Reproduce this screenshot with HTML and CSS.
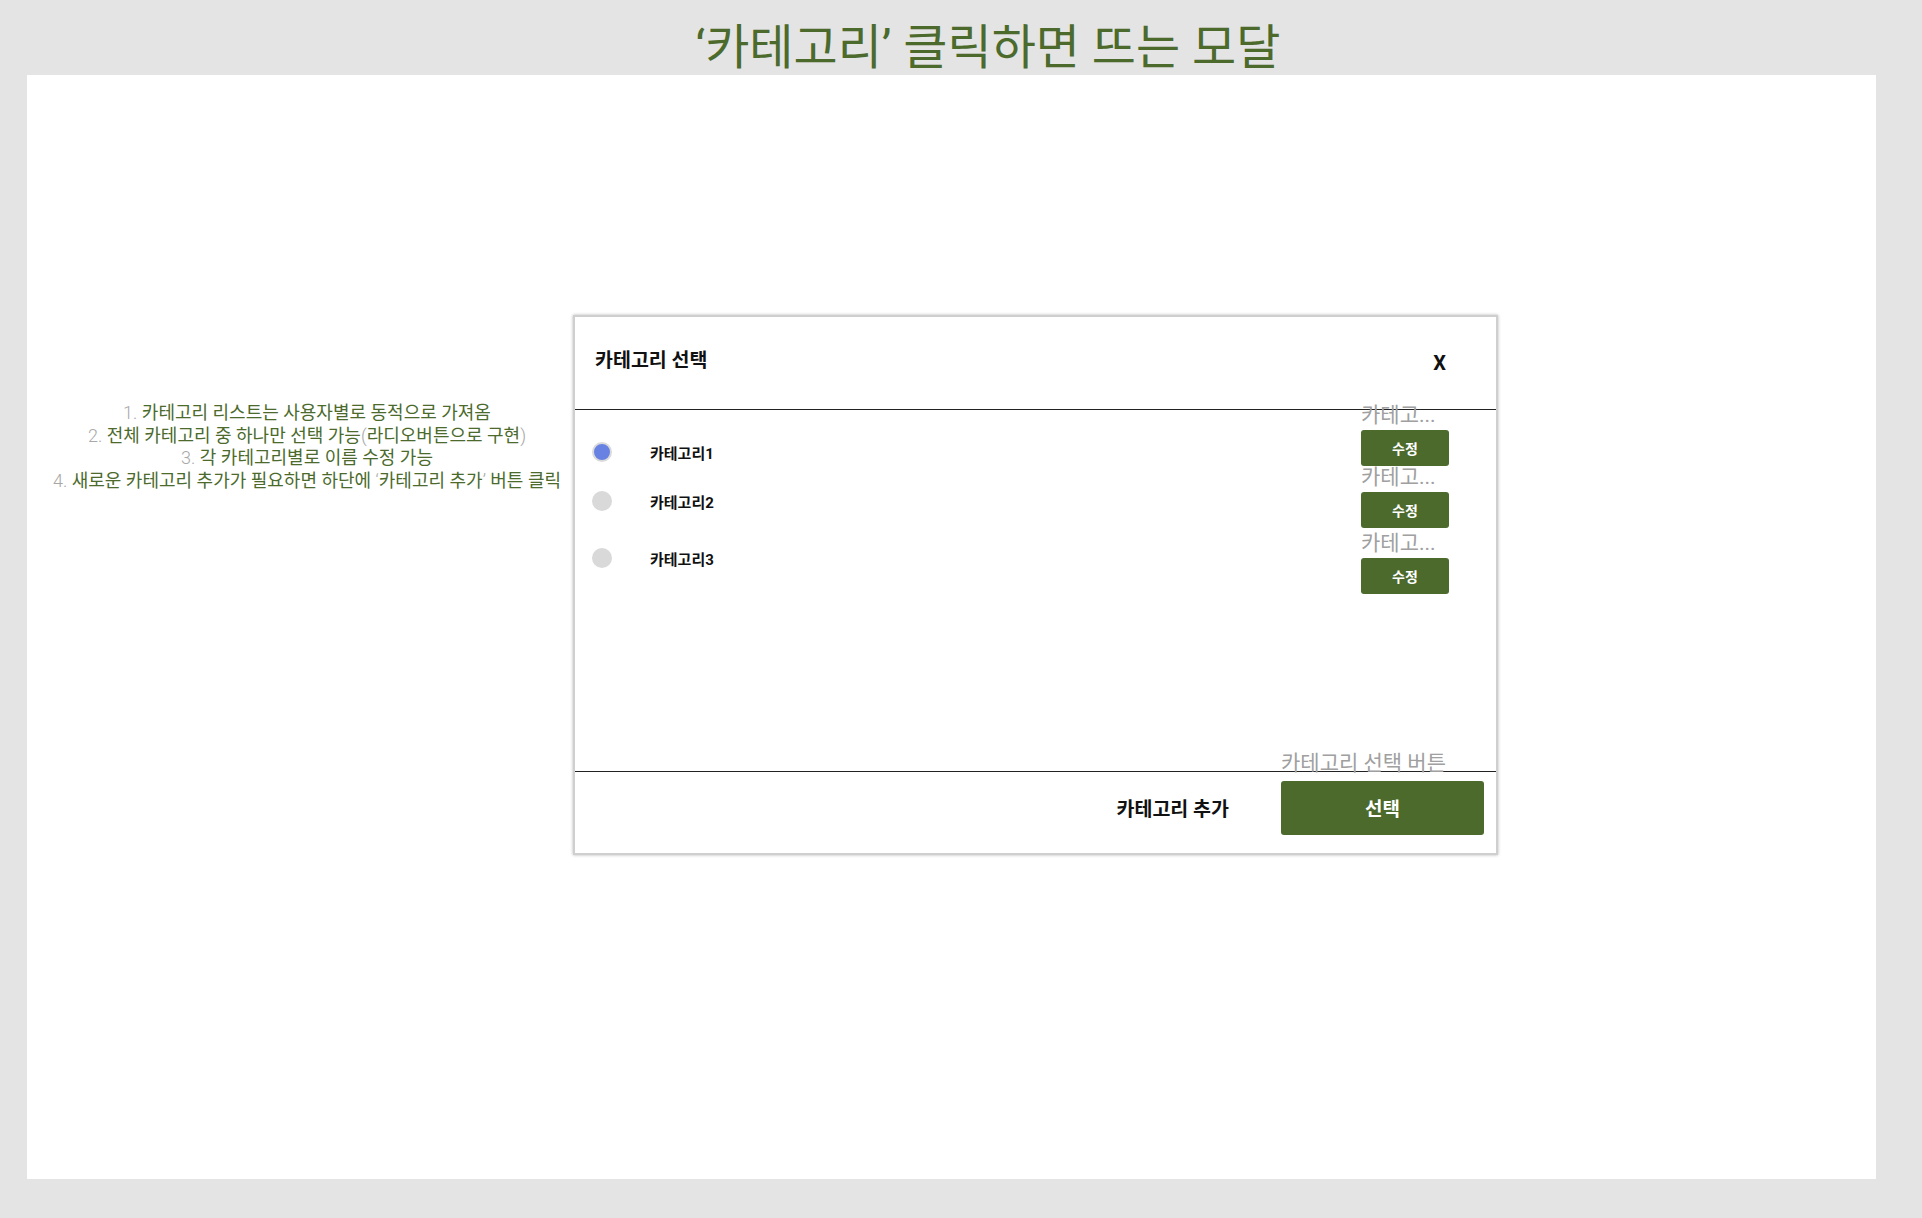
FILE: index.html
```html
<!DOCTYPE html>
<html lang="ko">
<head>
    <meta charset="UTF-8">
    <meta name="viewport" content="width=device-width, initial-scale=1.0">
    <title>카테고리 모달</title>

    <link rel="stylesheet" href="styles.css">
</head>
<body>

    <h1 class="page-title">‘카테고리’ 클릭하면 뜨는 모달</h1>

    <main class="board">
        <ol class="notes">
            <li><span class="num">1.</span> 카테고리 리스트는 사용자별로 동적으로 가져옴</li>
            <li><span class="num">2.</span> 전체 카테고리 중 하나만 선택 가능<span class="num">(</span>라디오버튼으로 구현<span class="num">)</span></li>
            <li><span class="num">3.</span> 각 카테고리별로 이름 수정 가능</li>
            <li><span class="num">4.</span> 새로운 카테고리 추가가 필요하면 하단에 <span class="num">‘</span>카테고리 추가<span class="num">’</span> 버튼 클릭</li>
        </ol>

        <div class="modal">
            <div class="modal-header">
                <h2>카테고리 선택</h2>
                <button class="close-btn">X</button>
            </div>

            <div class="modal-body">
                <ul class="choice-list">
                    <li class="choice">
                        <span class="radio checked"></span>
                        <span class="choice-name">카테고리1</span>
                    </li>
                    <li class="choice">
                        <span class="radio"></span>
                        <span class="choice-name">카테고리2</span>
                    </li>
                    <li class="choice">
                        <span class="radio"></span>
                        <span class="choice-name">카테고리3</span>
                    </li>
                </ul>

                <div class="edit-list">
                    <div class="edit-item">
                        <span class="tag">카테고...</span>
                        <button class="edit-btn">수정</button>
                    </div>
                    <div class="edit-item">
                        <span class="tag">카테고...</span>
                        <button class="edit-btn">수정</button>
                    </div>
                    <div class="edit-item">
                        <span class="tag">카테고...</span>
                        <button class="edit-btn">수정</button>
                    </div>
                </div>
            </div>

            <div class="modal-footer">
                <button class="add-btn">카테고리 추가</button>
                <div class="select-wrap">
                    <span class="tag">카테고리 선택 버튼</span>
                    <button class="select-btn">선택</button>
                </div>
            </div>
        </div>
    </main>

</body>
</html>
```

FILE: styles.css
```css
body {
    margin: 0;
    padding: 0;
    background-color: #e4e4e4;
    font-family: Roboto, "Noto Sans CJK KR", sans-serif;
    color: #111;
}

button {
    font-family: inherit;
    border: none;
    cursor: pointer;
}

.page-title {
    margin: 0;
    height: 75px;
    box-sizing: border-box;
    padding: 24px 0 0 54px;
    text-align: center;
    font-size: 48px;
    line-height: 1;
    font-weight: 400;
    color: #4b6a2c;
}

.board {
    display: flex;
    align-items: flex-start;
    height: 1104px;
    margin: 0 46px 39px 27px;
    padding: 240px 0 0 14px;
    box-sizing: border-box;
    background-color: #fff;
}

/* 설명 메모 */
.notes {
    list-style: none;
    width: 532px;
    margin: 87px 0 0;
    padding: 0;
    text-align: center;
    font-size: 18px;
    line-height: 22.5px;
    font-weight: 400;
    color: #4b6a2c;
    white-space: nowrap;
}

.notes .num {
    color: #a8a8a8;
    font-weight: 300;
}

/* 모달 */
.modal {
    display: flex;
    flex-direction: column;
    width: 925px;
    height: 540px;
    box-sizing: border-box;
    border: 2px solid #cfcfcf;
    box-shadow: 0 0 3px #b5b5b5;
    background-color: #fff;
}

.modal-header {
    display: flex;
    justify-content: space-between;
    align-items: flex-start;
    height: 93px;
    box-sizing: border-box;
    padding: 32px 50px 0 20px;
    border-bottom: 1px solid #222;
}

.modal-header h2 {
    margin: 0;
    font-size: 19.5px;
    line-height: 24px;
    font-weight: 700;
}

.close-btn {
    margin-top: 2px;
    padding: 0;
    background: none;
    font-family: Roboto, sans-serif;
    font-size: 20px;
    line-height: 24px;
    font-weight: 700;
    color: #111;
}

.modal-body {
    flex: 1;
    display: flex;
    justify-content: space-between;
    align-items: flex-start;
    padding: 20px 47px 0 17px;
}

.choice-list {
    list-style: none;
    margin: 0;
    padding: 12px 0 0;
    display: flex;
    flex-direction: column;
    gap: 29px;
}

.choice {
    display: flex;
    align-items: center;
    gap: 38px;
    height: 20px;
}

.choice:last-child {
    margin-top: 8px;
}

.radio {
    width: 20px;
    height: 20px;
    box-sizing: border-box;
    border-radius: 50%;
    background-color: #d9d9d9;
}

.radio.checked {
    background-color: #6782e2;
    border: 2px solid #dadada;
}

.choice-name {
    font-size: 15px;
    font-weight: 700;
}

.edit-list {
    display: flex;
    flex-direction: column;
    gap: 26px;
}

.edit-item {
    position: relative;
}

.edit-item:last-child {
    margin-top: 4px;
}

.tag {
    position: absolute;
    left: 0;
    font-size: 21px;
    line-height: 24px;
    color: #a0a0a0;
    white-space: nowrap;
}

.edit-item .tag {
    top: -27px;
}

.edit-btn {
    display: block;
    width: 88px;
    height: 36px;
    border-radius: 3px;
    background-color: #4b6a2c;
    color: #fff;
    font-size: 14px;
    font-weight: 700;
}

.modal-footer {
    display: flex;
    justify-content: flex-end;
    align-items: center;
    gap: 52px;
    height: 82px;
    box-sizing: border-box;
    padding: 9px 12px 19px 0;
    border-top: 1px solid #222;
}

.add-btn {
    padding: 0;
    background: none;
    font-size: 19.5px;
    font-weight: 700;
    color: #111;
}

.select-wrap {
    position: relative;
}

.select-wrap .tag {
    top: -30px;
}

.select-btn {
    display: block;
    width: 203px;
    height: 54px;
    border-radius: 3px;
    background-color: #4b6a2c;
    color: #fff;
    font-size: 19px;
    font-weight: 700;
}
```
